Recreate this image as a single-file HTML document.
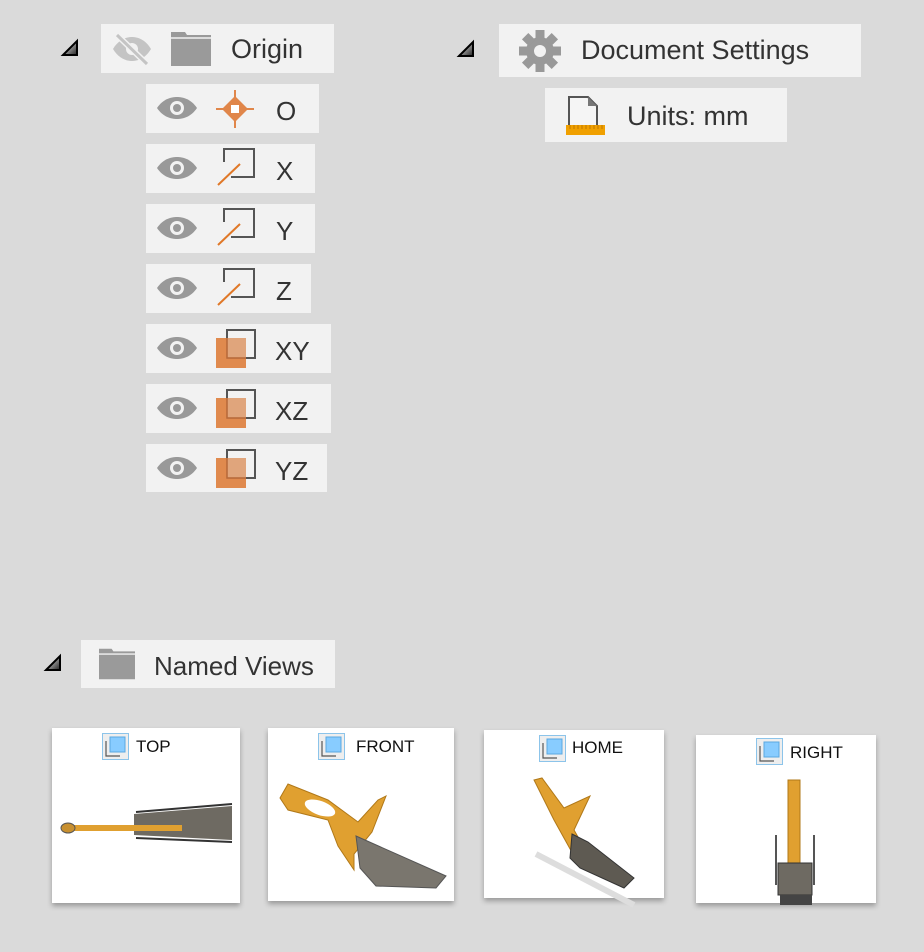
<!DOCTYPE html>
<html><head><meta charset="utf-8"><style>
body{margin:0;width:924px;height:952px;background:#dadada;position:relative;overflow:hidden;font-family:"Liberation Sans","DejaVu Sans",sans-serif;color:#333}
.b{position:absolute;background:#f2f2f2}
.t{position:absolute;font-size:26px;color:#333}
.tri{position:absolute;width:16px;height:16px}
.card{position:absolute;background:#fff;box-shadow:0 3px 5px rgba(0,0,0,.3)}
.card .lab{position:absolute;font-size:17px;color:#111}
svg{position:absolute;overflow:visible}
</style></head><body>
<svg class="tri" style="left:62px;top:40px" viewBox="0 0 16 16"><defs><linearGradient id="g" x1="0" y1="0" x2="1" y2="1"><stop offset="0" stop-color="#fff"/><stop offset="1" stop-color="#222"/></linearGradient></defs><path d="M1 15L15 1V15Z" fill="url(#g)" stroke="#000" stroke-width="2"/></svg>
<svg class="tri" style="left:458px;top:41px" viewBox="0 0 16 16"><path d="M1 15L15 1V15Z" fill="url(#g)" stroke="#000" stroke-width="2"/></svg>
<svg class="tri" style="left:45px;top:655px" viewBox="0 0 16 16"><path d="M1 15L15 1V15Z" fill="url(#g)" stroke="#000" stroke-width="2"/></svg>

<div class="b" style="left:101px;top:24px;width:233px;height:49px"></div>
<svg style="left:111px;top:32px" width="42" height="34" viewBox="0 0 42 34"><path d="M2 17C8 7 16 5 21 5S34 7 40 17C34 27 26 29 21 29S8 27 2 17Z" fill="#c4c4c4"/><circle cx="21" cy="17" r="6" fill="#f2f2f2"/><path d="M6 3L36 32" stroke="#f2f2f2" stroke-width="6"/><path d="M6 3L36 32" stroke="#c4c4c4" stroke-width="3"/></svg>
<svg style="left:171px;top:32px" width="40" height="34" viewBox="0 0 40 34"><path d="M0 0H14L16 3H40V34H0Z" fill="#9a9a9a"/><path d="M0 6H40" stroke="#f2f2f2" stroke-width="1.5"/></svg>
<div class="t" style="left:231px;top:34px;font-size:27px">Origin</div>

<div class="b" style="left:146px;top:84px;width:173px;height:49px"></div>
<div class="b" style="left:146px;top:144px;width:169px;height:49px"></div>
<div class="b" style="left:146px;top:204px;width:169px;height:49px"></div>
<div class="b" style="left:146px;top:264px;width:165px;height:49px"></div>
<div class="b" style="left:146px;top:324px;width:185px;height:49px"></div>
<div class="b" style="left:146px;top:384px;width:185px;height:49px"></div>
<div class="b" style="left:146px;top:444px;width:181px;height:48px"></div>

<svg width="0" height="0"><defs>
<g id="eye"><path d="M0 12C6 3 14 1 20 1S34 3 40 12C34 21 26 23 20 23S6 21 0 12Z" fill="#999"/><circle cx="20" cy="12" r="7" fill="#f2f2f2"/><circle cx="20" cy="12" r="4" fill="#999"/></g>
<g id="ax"><path d="M7 14V1H37V29H14" fill="none" stroke="#555" stroke-width="2"/><path d="M1 37L23 16" stroke="#e07828" stroke-width="2"/></g>
<g id="pl"><path d="M11 10V1H39V29H30" fill="none" stroke="#555" stroke-width="2"/><rect x="0" y="9" width="30" height="30" fill="#e08a4e"/><rect x="11" y="9" width="19" height="20" fill="#e0a57c"/><path d="M11 9V29H30" fill="none" stroke="#b66838" stroke-width="1.5"/></g>
</defs></svg>

<svg style="left:157px;top:96px" width="40" height="24"><use href="#eye"/></svg>
<svg style="left:157px;top:156px" width="40" height="24"><use href="#eye"/></svg>
<svg style="left:157px;top:216px" width="40" height="24"><use href="#eye"/></svg>
<svg style="left:157px;top:276px" width="40" height="24"><use href="#eye"/></svg>
<svg style="left:157px;top:336px" width="40" height="24"><use href="#eye"/></svg>
<svg style="left:157px;top:396px" width="40" height="24"><use href="#eye"/></svg>
<svg style="left:157px;top:456px" width="40" height="24"><use href="#eye"/></svg>

<svg style="left:215px;top:89px" width="40" height="40" viewBox="0 0 40 40"><path d="M20 1V39M1 20H39" stroke="#e0864a" stroke-width="2"/><path d="M20 7L33 20L20 33L7 20Z" fill="#e0864a"/><rect x="16" y="16" width="8" height="8" fill="#fff"/></svg>
<div class="t" style="left:276px;top:96px">O</div>

<svg style="left:217px;top:148px" width="40" height="40"><use href="#ax"/></svg>
<div class="t" style="left:276px;top:156px">X</div>
<svg style="left:217px;top:208px" width="40" height="40"><use href="#ax"/></svg>
<div class="t" style="left:276px;top:216px">Y</div>
<svg style="left:217px;top:268px" width="40" height="40"><use href="#ax"/></svg>
<div class="t" style="left:276px;top:276px">Z</div>

<svg style="left:216px;top:329px" width="40" height="40"><use href="#pl"/></svg>
<div class="t" style="left:275px;top:336px">XY</div>
<svg style="left:216px;top:389px" width="40" height="40"><use href="#pl"/></svg>
<div class="t" style="left:275px;top:396px">XZ</div>
<svg style="left:216px;top:449px" width="40" height="40"><use href="#pl"/></svg>
<div class="t" style="left:275px;top:456px">YZ</div>

<div class="b" style="left:499px;top:24px;width:362px;height:53px"></div>
<svg style="left:519px;top:30px" width="42" height="42" viewBox="-21 -21 42 42"><g fill="#999"><circle r="14"/><g id="tt"><rect x="-4.5" y="-21" width="9" height="10"/></g><use href="#tt" transform="rotate(45)"/><use href="#tt" transform="rotate(90)"/><use href="#tt" transform="rotate(135)"/><use href="#tt" transform="rotate(180)"/><use href="#tt" transform="rotate(225)"/><use href="#tt" transform="rotate(270)"/><use href="#tt" transform="rotate(315)"/></g><circle r="6" fill="#f2f2f2"/></svg>
<div class="t" style="left:581px;top:35px;font-size:27px">Document Settings</div>

<div class="b" style="left:545px;top:88px;width:242px;height:54px"></div>
<svg style="left:564px;top:96px" width="42" height="40" viewBox="0 0 42 40"><path d="M5 1H24L33 10V34H5Z" fill="#f5f5f5" stroke="#555" stroke-width="2"/><path d="M24 1V10H33" fill="#777"/><rect x="2" y="29" width="39" height="10" fill="#f0a000"/><path d="M6 29v4M10 29v4M14 29v4M18 29v4M22 29v4M26 29v4M30 29v4M34 29v4M38 29v4" stroke="#c07800" stroke-width="1"/></svg>
<div class="t" style="left:627px;top:101px;font-size:27px">Units: mm</div>

<div class="b" style="left:81px;top:640px;width:254px;height:48px"></div>
<svg style="left:99px;top:648px" width="36" height="32" viewBox="0 0 40 34"><path d="M0 0H14L16 3H40V34H0Z" fill="#9a9a9a"/><path d="M0 6H40" stroke="#f2f2f2" stroke-width="1.5"/></svg>
<div class="t" style="left:154px;top:651px">Named Views</div>

<svg width="0" height="0"><defs><g id="vi"><rect x="0.5" y="0.5" width="26" height="26" fill="#eee" stroke="#8cc4ea"/><rect x="8" y="4" width="15" height="15" fill="#88ccff" stroke="#5aa8e0"/><path d="M4 8V23H18" fill="none" stroke="#555" stroke-width="1.2"/></g></defs></svg>

<div class="card" style="left:52px;top:728px;width:188px;height:175px">
<svg style="left:50px;top:5px" width="27" height="27"><use href="#vi"/></svg><div class="lab" style="left:84px;top:9px">TOP</div>
<svg style="left:0;top:0" width="188" height="175"><path d="M82 86L180 78V112L82 107Z" fill="#6e6a62"/><path d="M84 84L180 76M84 110L180 114" stroke="#333" stroke-width="2"/><rect x="10" y="97" width="120" height="6" fill="#e0a030"/><ellipse cx="16" cy="100" rx="7" ry="5" fill="#c89030" stroke="#555"/></svg></div>

<div class="card" style="left:268px;top:728px;width:186px;height:173px">
<svg style="left:50px;top:5px" width="27" height="27"><use href="#vi"/></svg><div class="lab" style="left:88px;top:9px">FRONT</div>
<svg style="left:0;top:0" width="186" height="173"><path d="M12 70L20 56L60 72L90 94L110 72L118 68L104 104L86 126L86 142L70 118L60 92L20 82Z" fill="#e0a030" stroke="#b07818"/><ellipse cx="52" cy="80" rx="16" ry="7" fill="#fff" transform="rotate(20 52 80)"/><path d="M88 108L178 148L168 160L108 158L92 140Z" fill="#7a766e" stroke="#555"/></svg></div>

<div class="card" style="left:484px;top:730px;width:180px;height:168px">
<svg style="left:55px;top:5px" width="27" height="27"><use href="#vi"/></svg><div class="lab" style="left:88px;top:8px">HOME</div>
<svg style="left:0;top:0" width="180" height="168"><path d="M52 124L150 175" stroke="#ddd" stroke-width="6"/><path d="M50 50L58 48L80 78L106 66L90 100L98 114L90 126L70 90Z" fill="#e0a030" stroke="#b07818"/><path d="M88 104L104 112L150 148L140 158L96 138L86 128Z" fill="#5e5a52" stroke="#333"/></svg></div>

<div class="card" style="left:696px;top:735px;width:180px;height:168px">
<svg style="left:60px;top:3px" width="27" height="27"><use href="#vi"/></svg><div class="lab" style="left:94px;top:8px">RIGHT</div>
<svg style="left:0;top:0" width="180" height="168"><rect x="92" y="45" width="12" height="90" fill="#e0a030" stroke="#b07818"/><rect x="82" y="128" width="34" height="32" fill="#6e6a62" stroke="#333"/><path d="M80 100V150M118 100V150" stroke="#555" stroke-width="2"/><path d="M84 160h32v10h-32z" fill="#444"/></svg></div>
</body></html>
